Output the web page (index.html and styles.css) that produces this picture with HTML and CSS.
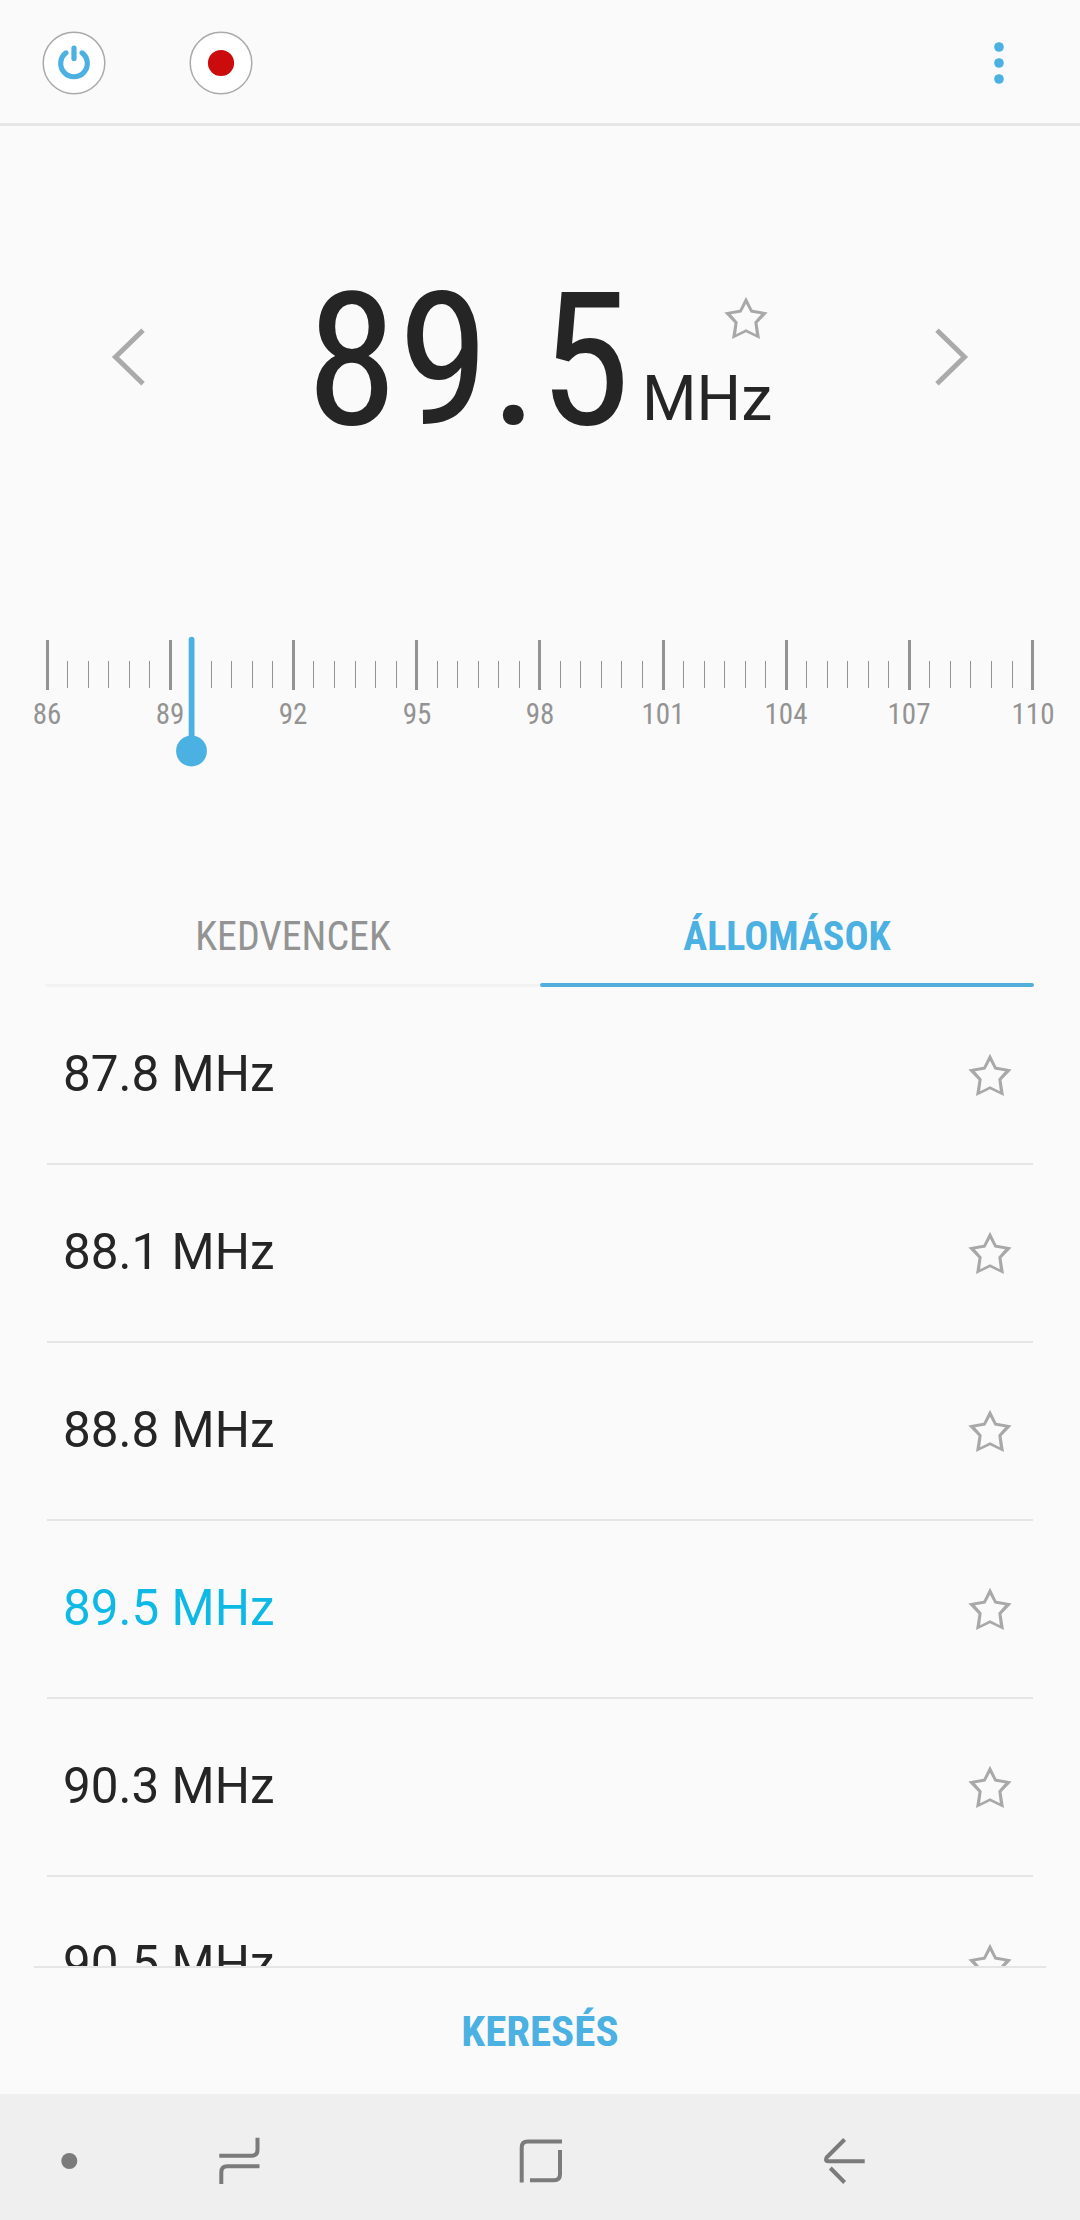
FILE: index.html
```html
<!DOCTYPE html>
<html lang="hu">
<head>
<meta charset="utf-8">
<title>Rádió</title>
<link rel="stylesheet" href="styles.css">
</head>
<body>
<svg class="defs" width="0" height="0" aria-hidden="true">
  <symbol id="star" viewBox="0 0 44 44">
    <path fill="#a8a8a8" fill-rule="evenodd" d="M22 .8 28.4 13.8 43.6 16.5 33.5 27 36 43 22 36.3 8 43 10.5 27 .4 16.5 15.6 13.8ZM22 7.8 17.4 16.5 6.9 18.3 13.7 26 12.1 38.2 22 33.2 31.9 38.2 30.3 26 37.1 18.3 26.6 16.5Z"/>
  </symbol>
</svg>

<header class="topbar">
  <button class="round" aria-label="Be/Ki">
    <svg width="64" height="64" viewBox="0 0 64 64"><circle cx="32" cy="32" r="30.8" fill="#fff" stroke="#aaa" stroke-width="1.5"/><path d="M23.9 21.9A13.3 13.3 0 1 0 40.1 21.9M32 17V27.5" fill="none" stroke="#4bb0e2" stroke-width="5.2" stroke-linecap="round"/></svg>
  </button>
  <button class="round" aria-label="Felvétel">
    <svg width="64" height="64" viewBox="0 0 64 64"><circle cx="32" cy="32" r="30.8" fill="#fff" stroke="#aaa" stroke-width="1.5"/><circle cx="32" cy="32" r="13.1" fill="#cc0c0c"/></svg>
  </button>
  <button class="more" aria-label="Továbbiak">
    <svg width="12" height="44" viewBox="0 0 12 44" fill="#4bb0e2"><circle cx="6" cy="6" r="4.8"/><circle cx="6" cy="22" r="4.8"/><circle cx="6" cy="38" r="4.8"/></svg>
  </button>
</header>

<main>
  <section class="tuner">
    <button aria-label="Előző"><svg width="40" height="60" viewBox="0 0 40 60"><path d="M33 3.3 5.5 30 33 56.7" fill="none" stroke="#aaa" stroke-width="5"/></svg></button>
    <div class="frequency">
      <span class="value">89.5</span>
      <div class="side">
        <svg class="star" width="44" height="44"><use href="#star"/></svg>
        <span class="unit">MHz</span>
      </div>
    </div>
    <button aria-label="Következő"><svg width="40" height="60" viewBox="0 0 40 60"><path d="M7 3.3 34.5 30 7 56.7" fill="none" stroke="#aaa" stroke-width="5"/></svg></button>
  </section>

  <svg class="dial" width="1080" height="150" viewBox="0 0 1080 150">
    <path class="major" d="M47.5 0v50M170.5 0v50M293.5 0v50M416.5 0v50M539.5 0v50M663.5 0v50M786.5 0v50M909.5 0v50M1032.5 0v50"/>
    <path class="minor" d="M67.5 21v27M88.5 21v27M108.5 21v27M129.5 21v27M149.5 21v27M211.5 21v27M231.5 21v27M252.5 21v27M272.5 21v27M313.5 21v27M334.5 21v27M355.5 21v27M375.5 21v27M396.5 21v27M437.5 21v27M457.5 21v27M478.5 21v27M498.5 21v27M519.5 21v27M560.5 21v27M580.5 21v27M601.5 21v27M621.5 21v27M642.5 21v27M683.5 21v27M704.5 21v27M724.5 21v27M745.5 21v27M765.5 21v27M806.5 21v27M827.5 21v27M847.5 21v27M868.5 21v27M888.5 21v27M929.5 21v27M950.5 21v27M970.5 21v27M991.5 21v27M1012.5 21v27"/>
    <g class="labels">
      <text x="47" y="84">86</text><text x="170" y="84">89</text><text x="293" y="84">92</text><text x="417" y="84">95</text><text x="540" y="84">98</text><text x="663" y="84">101</text><text x="786" y="84">104</text><text x="909" y="84">107</text><text x="1033" y="84">110</text>
    </g>
    <rect x="188.7" y="-3.3" width="5.8" height="114" rx="2.9" fill="#4bb0e2"/>
    <circle cx="191.5" cy="111" r="15.4" fill="#4bb0e2"/>
  </svg>

  <nav class="tabs">
    <a class="tab">KEDVENCEK</a>
    <a class="tab active">ÁLLOMÁSOK</a>
  </nav>

  <ul class="stations">
    <li><span>87.8 MHz</span><svg width="44" height="44"><use href="#star"/></svg></li>
    <li><span>88.1 MHz</span><svg width="44" height="44"><use href="#star"/></svg></li>
    <li><span>88.8 MHz</span><svg width="44" height="44"><use href="#star"/></svg></li>
    <li class="current"><span>89.5 MHz</span><svg width="44" height="44"><use href="#star"/></svg></li>
    <li><span>90.3 MHz</span><svg width="44" height="44"><use href="#star"/></svg></li>
    <li><span>90.5 MHz</span><svg width="44" height="44"><use href="#star"/></svg></li>
  </ul>
</main>

<footer class="scan">KERESÉS</footer>

<nav class="navbar">
  <svg width="60" height="60" viewBox="0 0 60 60"><circle cx="30.3" cy="30" r="8" fill="#7b7b7b"/></svg>
  <svg class="recents" width="60" height="60" viewBox="0 0 60 60"><path d="M10.3 24.7H42.5Q48.5 24.7 48.5 18.7V6.7M50.5 35.2H18.3Q12.3 35.2 12.3 41.2V53"/></svg>
  <svg class="home" width="60" height="60" viewBox="0 0 60 60"><path d="M10.7 51.5V16.5Q10.7 10.5 16.7 10.5H51M49 19V43.3Q49 49.3 43 49.3H19"/></svg>
  <svg class="back" width="60" height="60" viewBox="0 0 60 60"><path d="M30.6 8.5 12.6 26.5Q10.8 30.3 14 30.3H50.7M16.3 37 30.6 51.5"/></svg>
</nav>
</body>
</html>
```
FILE: styles.css
```css
* { box-sizing: border-box; }

body {
  margin: 0;
  width: 1080px;
  height: 2220px;
  display: flex;
  flex-direction: column;
  overflow: hidden;
  background: #fafafa;
  color: #252525;
  font-family: Roboto, "Liberation Sans", sans-serif;
}

svg { display: block; flex: none; }
.defs { display: none; }

button {
  padding: 0;
  border: 0;
  background: none;
}

.topbar {
  flex: none;
  height: 126px;
  padding: 3px 75px 0 42px;
  display: flex;
  align-items: center;
  gap: 83px;
  border-bottom: 3px solid #e6e6e6;
}
.more { margin-left: auto; }

main {
  flex: 1;
  min-height: 0;
  display: flex;
  flex-direction: column;
}

.tuner {
  flex: none;
  height: 511px;
  padding: 201px 110px 0;
  display: flex;
  justify-content: space-between;
  align-items: flex-start;
}
.frequency {
  display: flex;
  width: 480px;
  margin-top: -60px;
  padding-left: 6px;
}
.value {
  width: 336px;
  font-size: 186px;
  line-height: 186px;
  font-stretch: 75%;
}
.side {
  padding-top: 29px;
}
.side .star { margin-left: 82px; }
.unit {
  display: block;
  margin-top: 27px;
  font-size: 62.5px;
  line-height: 64px;
}

.dial {
  margin-top: 3px;
  overflow: visible;
}
.major { stroke: #939393; stroke-width: 3; }
.minor { stroke: #939393; stroke-width: 1; }
.labels {
  fill: #939393;
  font-size: 29px;
  font-stretch: 75%;
  text-anchor: middle;
}

.tabs {
  flex: none;
  display: grid;
  grid-template-columns: 1fr 1fr;
  height: 102px;
  margin: 95px 46px 0;
}
.tab {
  padding-top: 29px;
  border-bottom: 3px solid #f2f2f2;
  font-size: 40px;
  line-height: 46px;
  font-stretch: 75%;
  text-align: center;
  color: #939393;
}
.tab.active {
  border-bottom: 0;
  color: #4bb0e2;
  font-weight: 700;
  display: flex;
  flex-direction: column;
  justify-content: space-between;
}
.tab.active::after {
  content: "";
  height: 4px;
  border-radius: 2px;
  background: #52aedb;
}

.stations {
  flex: 1;
  min-height: 0;
  overflow: hidden;
  margin: 0 47px;
  padding: 0;
  list-style: none;
}
.stations li {
  display: flex;
  justify-content: space-between;
  align-items: center;
  height: 178px;
  padding: 0 21px 0 16px;
  border-bottom: 2px solid #e5e5e5;
  font-size: 49.4px;
  line-height: 58px;
}
.stations span { margin-bottom: 2px; }
.current span { color: #0fb9e6; }

.scan {
  flex: none;
  height: 128px;
  margin: 0 34px;
  border-top: 2px solid #e5e5e5;
  color: #4bb0e2;
  font-size: 43px;
  font-weight: 700;
  font-stretch: 75%;
  line-height: 126px;
  text-align: center;
}

.navbar {
  flex: none;
  height: 126px;
  padding: 37px 39px 0;
  display: flex;
  background: #efefef;
}
.navbar path {
  fill: none;
  stroke: #7b7b7b;
  stroke-width: 4;
}
.recents { margin-left: 110px; }
.home { margin-left: 242px; }
.back { margin-left: 243px; }
```
